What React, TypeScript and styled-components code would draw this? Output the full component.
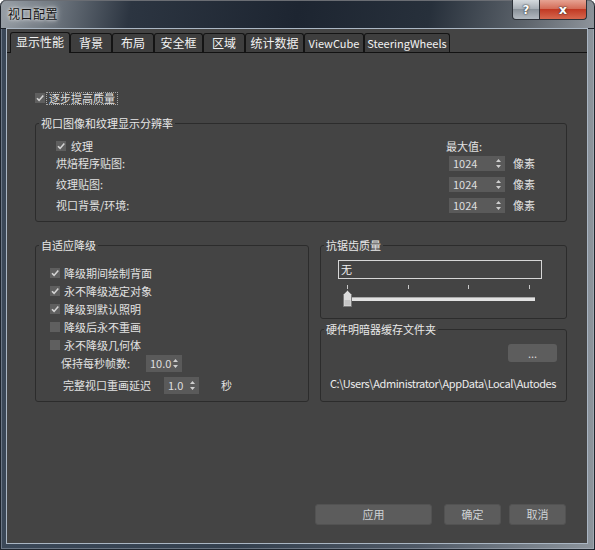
import React from "react";
import styled, { createGlobalStyle } from "styled-components";

const GlobalStyle = createGlobalStyle`
  html, body { margin: 0; padding: 0; background: #ffffff; }
  body { font-family: "Noto Sans CJK SC", "Noto Sans", sans-serif; }
  * { box-sizing: border-box; }
`;

const Window = styled.div`
  width: 595px;
  height: 550px;
  display: flex;
  flex-direction: column;
  border-radius: 6px 6px 0 0;
  overflow: hidden;
  background: linear-gradient(90deg, #3b4858 0%, #34404e 40%, #4f5966 70%, #8c949c 100%);
  box-shadow: inset 0 0 0 1px #1e252e, inset 0 0 0 2px rgba(200, 210, 220, 0.35);
`;

const TitleBar = styled.div`
  height: 29px;
  flex: none;
  display: flex;
  align-items: flex-start;
  padding-left: 8px;
  background: linear-gradient(100deg, #99a0a7 0%, #6b737c 10%, #2c3541 22%, #1d2531 50%, #27303b 72%, #5c636b 88%, #8f959c 100%);
  border-radius: 6px 6px 0 0;
  box-shadow: inset 0 1px 0 rgba(255, 255, 255, 0.35), inset 0 0 0 1px #1b2028;
`;

const Title = styled.span`
  margin-top: 7px;
  font-size: 12px;
  line-height: 14px;
  letter-spacing: 0.5px;
  color: #111;
  text-shadow: 0 0 6px rgba(255, 255, 255, 0.9), 0 0 3px rgba(255, 255, 255, 0.9);
`;

const Caption = styled.div`
  margin-left: auto;
  margin-right: 8px;
  display: flex;
`;

const CaptionButton = styled.div<{ $close?: boolean }>`
  width: ${(p) => (p.$close ? 47 : 28)}px;
  height: 20px;
  display: flex;
  align-items: center;
  justify-content: center;
  border: 1px solid #2c3138;
  border-top: none;
  border-left: ${(p) => (p.$close ? "none" : "1px solid #2c3138")};
  border-radius: ${(p) => (p.$close ? "0 0 4px 0" : "0 0 0 4px")};
  background: ${(p) =>
    p.$close
      ? "linear-gradient(#e6a393 0%, #d46d58 45%, #c13a24 50%, #d6674e 100%)"
      : "linear-gradient(#d5dade 0%, #a9b0b7 45%, #8a929a 50%, #b3bac1 100%)"};
  color: #fff;
  font-family: "DejaVu Sans", sans-serif;
  font-weight: bold;
  font-size: ${(p) => (p.$close ? 13 : 12)}px;
  text-shadow: 0 0 2px #333, 0 0 1px #222;
`;

const Client = styled.div`
  flex: 1;
  margin: 0 8px 7px 7px;
  display: flex;
  flex-direction: column;
  background: #444444;
  box-shadow: 0 0 0 1px #aab6c3;
  color: #e2e2e2;
`;

const TabStrip = styled.div`
  height: 24px;
  flex: none;
  display: flex;
  align-items: flex-end;
  padding-left: 3px;
  border-bottom: 1px solid #121212;
`;

const Tab = styled.div<{ $width: number; $active?: boolean; $latin?: boolean }>`
  width: ${(p) => p.$width}px;
  height: ${(p) => (p.$active ? 21 : 19)}px;
  margin-bottom: ${(p) => (p.$active ? -1 : 0)}px;
  position: relative;
  display: flex;
  align-items: center;
  justify-content: center;
  border: 1px solid #141414;
  border-bottom: none;
  border-radius: 3px 3px 0 0;
  background: ${(p) => (p.$active ? "#444444" : "#3e3e3e")};
  color: #f2f2f2;
  font-size: ${(p) => (p.$latin ? 11 : 12)}px;
  line-height: 14px;
  white-space: nowrap;
  padding-bottom: ${(p) => (p.$active ? 2 : 0)}px;
`;

const TabPage = styled.div`
  flex: 1;
  display: flex;
  flex-direction: column;
  padding-left: 28px;
  font-size: 11px;
  line-height: 13px;
`;

const TopRow = styled.div`
  margin-top: 38px;
  height: 14px;
  display: flex;
  align-items: center;
`;

const Box = styled.span`
  width: 10px;
  height: 10px;
  flex: none;
  display: flex;
  align-items: center;
  justify-content: center;
  background: #5f5f5f;
`;

const FocusLabel = styled.span`
  margin-left: 1px;
  padding: 0 2px;
  border: 1px dotted #a8a8a8;
  line-height: 11px;
`;

const Group = styled.div<{ $width: number; $height?: number }>`
  position: relative;
  width: ${(p) => p.$width}px;
  ${(p) => (p.$height ? `height: ${p.$height}px;` : "")}
  border: 1px solid #2c2c2c;
  border-radius: 3px;
  display: flex;
  flex-direction: column;
`;

const Legend = styled.span`
  position: absolute;
  top: -7px;
  left: 3px;
  padding: 0 2px;
  background: #444444;
  color: #e8e8e8;
  line-height: 13px;
`;

const Group1 = styled(Group)`
  margin-top: 18px;
  padding: 15px 0 5px 20px;
`;

const HeaderRow = styled.div`
  height: 14px;
  display: flex;
  align-items: center;
`;

const HeaderLeft = styled.div`
  width: 390px;
  display: flex;
  align-items: center;
`;

const SpinRow = styled.div`
  height: 21px;
  display: flex;
  align-items: center;
`;

const RowLabel = styled.span<{ $width: number; $indent?: number }>`
  width: ${(p) => p.$width}px;
  margin-left: ${(p) => p.$indent ?? 0}px;
  flex: none;
  white-space: nowrap;
`;

const Spinner = styled.div<{ $width: number; $height: number }>`
  width: ${(p) => p.$width}px;
  height: ${(p) => p.$height}px;
  flex: none;
  display: flex;
  align-items: center;
  justify-content: space-between;
  padding: 0 4px;
  background: #5a5a5a;
  color: #dedede;
  font-size: 11px;
`;

const Unit = styled.span<{ $gap: number }>`
  margin-left: ${(p) => p.$gap}px;
`;

const BottomRow = styled.div`
  margin-top: 23px;
  display: flex;
  align-items: flex-start;
  gap: 11px;
`;

const Group2 = styled(Group)`
  padding: 18px 0 0 14px;
`;

const CheckRow = styled.div`
  height: 18px;
  display: flex;
  align-items: center;
  gap: 4px;
`;

const FieldRow = styled.div<{ $top?: number }>`
  height: 18px;
  margin-top: ${(p) => p.$top ?? 0}px;
  display: flex;
  align-items: center;
`;

const RightColumn = styled.div`
  width: 247px;
  display: flex;
  flex-direction: column;
  gap: 10px;
`;

const Group3 = styled(Group)`
  padding: 14px 0 0 17px;
`;

const TextBox = styled.div`
  width: 204px;
  height: 19px;
  border: 1px solid #d6d6d6;
  padding-left: 2px;
  line-height: 17px;
  color: #f0f0f0;
  font-size: 11px;
`;

const Slider = styled.div`
  position: relative;
  width: 204px;
  height: 28px;
`;

const Ticks = styled.div`
  width: 183px;
  height: 4px;
  margin: 6px 0 0 9px;
  display: flex;
  justify-content: space-between;
`;

const Tick = styled.span`
  width: 1px;
  height: 4px;
  background: #c8c8c8;
`;

const Track = styled.div`
  width: 189px;
  height: 4px;
  margin: 8px 0 0 8px;
  background: #e2e2e2;
  border-top: 1px solid #a9a9a9;
`;

const Thumb = styled.svg`
  position: absolute;
  left: 5px;
  top: 11px;
`;

const Group4 = styled(Group)`
  padding: 14px 9px 0 9px;
`;

const SmallButton = styled.div`
  align-self: flex-end;
  width: 49px;
  height: 18px;
  border-radius: 3px;
  background: #5d5d5d;
  display: flex;
  align-items: center;
  justify-content: center;
  color: #d8d8d8;
  line-height: 12px;
`;

const PathText = styled.div`
  margin-top: 14px;
  white-space: nowrap;
  line-height: 14px;
  letter-spacing: -0.4px;
  color: #ececec;
`;

const Footer = styled.div`
  margin-top: auto;
  padding: 0 21px 18px 0;
  display: flex;
  justify-content: flex-end;
`;

const DialogButton = styled.div<{ $width: number; $gap?: number }>`
  width: ${(p) => p.$width}px;
  height: 21px;
  margin-right: ${(p) => p.$gap ?? 0}px;
  border-radius: 3px;
  border: 1px solid #525252;
  background: #5c5c5c;
  display: flex;
  align-items: center;
  justify-content: center;
  color: #cfd3d6;
  font-size: 11px;
`;

const CheckMark = () => (
  <svg width="10" height="10" viewBox="0 0 10 10">
    <path d="M2 5.2 L4.1 7.4 L8.3 2.5" stroke="#d4d4d4" strokeWidth="1.6" fill="none" />
  </svg>
);

const Arrows = () => (
  <svg width="5" height="9" viewBox="0 0 5 9">
    <path d="M2.5 0 L5 3 H0 Z M2.5 9 L0 6 H5 Z" fill="#cfcfcf" />
  </svg>
);

const Check = ({ checked }: { checked?: boolean }) => <Box>{checked && <CheckMark />}</Box>;

const tabs = [
  { label: "显示性能", width: 60 },
  { label: "背景", width: 42 },
  { label: "布局", width: 42 },
  { label: "安全框", width: 49 },
  { label: "区域", width: 42 },
  { label: "统计数据", width: 59 },
  { label: "ViewCube", width: 60, latin: true },
  { label: "SteeringWheels", width: 86, latin: true },
];

const maps = ["烘焙程序贴图:", "纹理贴图:", "视口背景/环境:"];

const degrade = [
  { label: "降级期间绘制背面", checked: true },
  { label: "永不降级选定对象", checked: true },
  { label: "降级到默认照明", checked: true },
  { label: "降级后永不重画", checked: false },
  { label: "永不降级几何体", checked: false },
];

export default function App() {
  return (
    <>
      <GlobalStyle />
      <Window>
        <TitleBar>
          <Title>视口配置</Title>
          <Caption>
            <CaptionButton>?</CaptionButton>
            <CaptionButton $close>x</CaptionButton>
          </Caption>
        </TitleBar>
        <Client>
          <TabStrip>
            {tabs.map((t, i) => (
              <Tab key={t.label} $width={t.width} $active={i === 0} $latin={t.latin}>
                {t.label}
              </Tab>
            ))}
          </TabStrip>
          <TabPage>
            <TopRow>
              <Check checked />
              <FocusLabel>逐步提高质量</FocusLabel>
            </TopRow>

            <Group1 $width={532}>
              <Legend>视口图像和纹理显示分辨率</Legend>
              <HeaderRow>
                <HeaderLeft>
                  <Check checked />
                  <Unit $gap={5}>纹理</Unit>
                </HeaderLeft>
                <span>最大值:</span>
              </HeaderRow>
              {maps.map((m) => (
                <SpinRow key={m}>
                  <RowLabel $width={393}>{m}</RowLabel>
                  <Spinner $width={56} $height={15}>
                    1024
                    <Arrows />
                  </Spinner>
                  <Unit $gap={8}>像素</Unit>
                </SpinRow>
              ))}
            </Group1>

            <BottomRow>
              <Group2 $width={274} $height={157}>
                <Legend>自适应降级</Legend>
                {degrade.map((d) => (
                  <CheckRow key={d.label}>
                    <Check checked={d.checked} />
                    {d.label}
                  </CheckRow>
                ))}
                <FieldRow>
                  <RowLabel $width={85} $indent={11}>
                    保持每秒帧数:
                  </RowLabel>
                  <Spinner $width={36} $height={17}>
                    10.0
                    <Arrows />
                  </Spinner>
                </FieldRow>
                <FieldRow $top={4}>
                  <RowLabel $width={101} $indent={13}>
                    完整视口重画延迟
                  </RowLabel>
                  <Spinner $width={35} $height={17}>
                    1.0
                    <Arrows />
                  </Spinner>
                  <Unit $gap={22}>秒</Unit>
                </FieldRow>
              </Group2>

              <RightColumn>
                <Group3 $width={247} $height={74}>
                  <Legend>抗锯齿质量</Legend>
                  <TextBox>无</TextBox>
                  <Slider>
                    <Ticks>
                      <Tick />
                      <Tick />
                      <Tick />
                      <Tick />
                    </Ticks>
                    <Track />
                    <Thumb width="9" height="17" viewBox="0 0 9 17">
                      <path d="M0.5 4.5 L4.5 0.5 L8.5 4.5 V16.5 H0.5 Z" fill="#dcdcdc" stroke="#7a7a7a" />
                      <path d="M1.5 10 H7.5 V15.5 H1.5 Z" fill="#c4c4c4" />
                    </Thumb>
                  </Slider>
                </Group3>
                <Group4 $width={247} $height={73}>
                  <Legend>硬件明暗器缓存文件夹</Legend>
                  <SmallButton>...</SmallButton>
                  <PathText>C:\Users\Administrator\AppData\Local\Autodes</PathText>
                </Group4>
              </RightColumn>
            </BottomRow>

            <Footer>
              <DialogButton $width={117} $gap={12}>
                应用
              </DialogButton>
              <DialogButton $width={57} $gap={8}>
                确定
              </DialogButton>
              <DialogButton $width={57}>取消</DialogButton>
            </Footer>
          </TabPage>
        </Client>
      </Window>
    </>
  );
}
